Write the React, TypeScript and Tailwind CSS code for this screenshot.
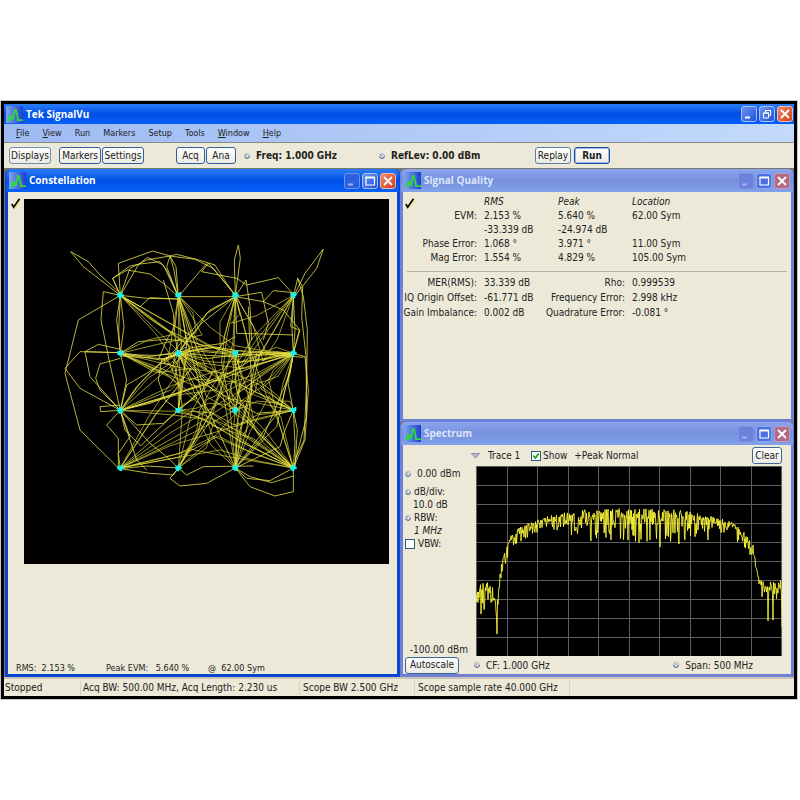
import { ReactNode } from 'react';
import clsx from 'clsx';

type Point = [number, number];

// small seeded generator so the traces look the same on every render
function createRandom(seed: number) {
  let state = seed;
  return () => {
    state = (state + 0x6d2b79f5) | 0;
    let t = Math.imul(state ^ (state >>> 15), 1 | state);
    t = (t + Math.imul(t ^ (t >>> 7), 61 | t)) ^ t;
    return ((t ^ (t >>> 14)) >>> 0) / 4294967296;
  };
}

const toPoints = (points: Point[]) =>
  points.map(([x, y]) => `${x.toFixed(1)},${y.toFixed(1)}`).join(' ');

const COLS = [211, 385, 556, 730];
const ROWS = [196, 370, 541, 714];

const OUTER_PATHS = [
  '211,196 100,110 62,65 115,95 150,135 211,190',
  '556,196 553,90 565,45 571,85 556,196',
  '733,196 765,130 820,57 800,115 733,200',
  '211,196 205,100 308,63 360,78 372,120 385,200',
  '211,196 240,115 290,90 360,78 435,88 490,115 556,196',
  '211,196 188,145 240,108 270,102 330,95 350,120 385,200',
  '211,196 188,145 232,120 300,132 340,160 385,200',
  '211,196 265,105 292,82 340,105 385,200',
  '360,78 380,73 440,88 495,105 530,160 556,196',
  '385,200 350,110 360,78 378,110 385,200',
  '385,200 470,100',
  '455,125 475,100 510,140 556,196',
  '455,125 560,145 590,165 685,143 733,196',
  '211,196 85,270 45,430 90,600 205,714 211,716',
  '211,541 90,475 45,415 90,365 211,368',
  '211,541 120,440 105,365 145,343 211,358',
  '105,365 211,368',
  '211,541 150,480 137,445 150,402 211,385',
  '211,196 160,185 153,270 175,380 211,541',
  '211,541 152,545 150,530 211,525',
  '211,541 170,585 205,625 205,716',
  '211,541 240,620 205,670 211,716',
  '211,196 200,270 211,370',
  '211,196 206,300 211,370',
  '211,196 222,290 211,370',
  '211,370 230,450 211,541',
  '730,370 765,380 775,480 765,630 730,714',
  '730,200 743,145 760,200 772,300 770,460 762,630 735,690',
  '743,145 758,170 755,260 768,380 770,560 730,714',
  '730,200 735,300 730,370 714,460 730,541 735,640 730,714',
  '730,200 726,300 730,370',
  '730,200 722,290 748,300 730,370',
  '556,714 600,770 675,798 730,785 730,714',
  '385,714 360,745 390,768 470,760 556,714',
  '556,714 600,740 665,758 730,738',
  '556,714 590,745 660,752 730,714',
  '211,716 300,730 370,735 385,714',
  '211,716 290,708 385,714',
  '385,200 556,200',
  '211,196 290,205 385,207',
  '211,196 270,230 300,203 385,207',
  '556,200 640,215 700,240 750,300 730,370',
  '556,200 635,187 655,280 640,330',
  '640,215 670,182 733,188',
  '556,200 588,150 600,230 605,330',
  '730,541 742,600 735,714',
  '211,541 225,600 272,648 300,620 385,541',
  '211,541 260,585 340,580 385,541',
  '211,541 300,640 350,680 385,714',
  '211,541 260,690 290,720',
  '385,714 410,735 460,710 610,708',
  '385,370 335,390 325,450 345,510 385,541',
  '385,370 340,400 350,400 375,410 390,480 385,541',
  '556,200 470,250 440,300 410,330 385,370',
  '556,200 455,280 420,320 385,370',
  '556,200 480,240 400,330 340,400',
  '556,200 560,310 640,312 730,315',
  '211,370 265,335 350,328 420,335 556,370',
  '211,370 330,390 430,362 556,374 730,370',
  '211,374 320,376 385,370 470,386 620,366 730,374',
  '211,378 340,386 430,352 520,340 556,320',
  '211,368 300,380 385,366 490,352 556,368',
  '385,370 470,376 556,380 640,372 760,382',
  '211,541 470,462 530,435 620,380',
  '211,541 385,490 500,452 640,400 730,370',
  '211,541 300,520 470,456 556,420 730,374',
  '211,541 270,460 340,390 385,370',
  '211,541 230,465 290,430 335,400',
  '211,541 260,470 330,400 410,350',
  '385,370 470,462 556,541',
  '385,370 440,450 620,550 730,541',
  '385,370 430,460 480,550 556,714',
  '385,200 410,330 440,430 470,550',
  '385,200 375,290 350,330 325,390',
  '385,200 400,270 410,340 400,450 385,541',
  '340,150 370,250 375,320 385,370',
  '556,714 560,640 600,480 620,370',
  '556,714 590,600 605,480 595,230',
  '556,714 575,590 600,500 630,370',
  '556,714 690,540 725,400 730,370',
  '556,714 640,620 720,430 730,370',
  '556,714 680,590 730,370',
  '730,541 705,600 690,650 556,714',
];

function createInnerPaths() {
  const random = createRandom(41);
  const pick = (bias: number) => Math.min(3, Math.floor(random() * 4 + bias));
  const paths: string[] = [];
  while (paths.length < 88) {
    const c1 = pick(0);
    const r1 = pick(0);
    const c2 = pick(0.4);
    const r2 = pick(0.3);
    if (c1 === c2 && r1 === r2) continue;
    // the lower left corner of the grid stays sparse
    if (r1 >= 2 && r2 >= 2 && c1 + c2 < 3) continue;
    const start: Point = [COLS[c1], ROWS[r1]];
    const end: Point = [COLS[c2], ROWS[r2]];
    const pull: Point = [350 + random() * 330, 290 + random() * 360];
    const wobble = 34;
    const points: Point[] = [start];
    for (const t of [0.25, 0.52, 0.78]) {
      const weight = 0.45 * (1 - Math.abs(t - 0.5) * 2) + 0.04;
      const x = start[0] + (end[0] - start[0]) * t;
      const y = start[1] + (end[1] - start[1]) * t;
      points.push([
        Math.min(736, x + (pull[0] - x) * weight + (random() - 0.5) * wobble),
        Math.min(716, y + (pull[1] - y) * weight + (random() - 0.5) * wobble),
      ]);
    }
    points.push(end);
    paths.push(toPoints(points));
  }
  return paths;
}

const INNER_PATHS = createInnerPaths();

// [x, centre of the trace, noise going up, noise going down]
const ENVELOPE = [
  [0, 128, 6, 16],
  [9, 125, 10, 20],
  [18, 125, 6, 10],
  [20, 142, 2, 10],
  [22, 134, 4, 14],
  [24, 108, 4, 8],
  [28, 92, 4, 8],
  [34, 75, 5, 16],
  [44, 65, 4, 11],
  [61, 57, 4, 10],
  [80, 54, 6, 13],
  [100, 54, 10, 18],
  [150, 53, 11, 23],
  [195, 53, 10, 26],
  [230, 54, 6, 14],
  [254, 59, 4, 9],
  [267, 70, 6, 17],
  [277, 84, 5, 8],
  [283, 116, 4, 6],
  [285, 122, 8, 10],
  [306, 122, 8, 13],
];

const SPIKES: Record<number, number> = {
  5: 148,
  21: 168,
  115: 75,
  135: 74,
  174: 74,
  184: 81,
  203: 78,
  232: 74,
  292: 155,
  297: 154,
  306: 161,
};

function createSpectrum() {
  const random = createRandom(7);
  const points: Point[] = [];
  let index = 0;
  for (let x = 0; x <= 306; x += 0.5) {
    while (index < ENVELOPE.length - 2 && ENVELOPE[index + 1][0] < x) index++;
    const a = ENVELOPE[index];
    const b = ENVELOPE[index + 1];
    const t = (x - a[0]) / (b[0] - a[0]);
    const [, centre, up, down] = a.map((value, i) => value + (b[i] - value) * t);
    const noise = random();
    const offset =
      noise < 0.52 ? -up * random() : down * Math.pow(random(), 1.9);
    points.push([x, SPIKES[x] ?? centre + offset]);
  }
  return toPoints(points);
}

const SPECTRUM = createSpectrum();

const MENUS = ['File', 'View', 'Run', 'Markers', 'Setup', 'Tools', 'Window', 'Help'];
const UNDERLINED = ['File', 'View', 'Window', 'Help'];

function AppIcon() {
  return (
    <svg viewBox="0 0 18 18" className="size-[17px] shrink-0" aria-hidden="true">
      <defs>
        <linearGradient id="icon-bg" x1="0" y1="0" x2="1" y2="0">
          <stop offset="0" stopColor="#7fa6ea" />
          <stop offset="1" stopColor="#1c3fd0" />
        </linearGradient>
      </defs>
      <rect width="18" height="18" fill="url(#icon-bg)" />
      <path
        d="M1.500 15h2.500V11h2v2.500h1.500L9.500 4h1l2 8.500V15H18"
        fill="none"
        stroke="#2fd83a"
        strokeWidth="1.900"
      />
    </svg>
  );
}

function CheckMark() {
  return (
    <svg viewBox="0 0 10 11" className="mt-[4px] h-[11px] w-[10px] shrink-0" aria-hidden="true">
      <path d="M1.500 7l2 3L9.300 1.500" fill="none" stroke="#e8e23c" strokeWidth="1.200" />
      <path d="M.8 6l1.800 3.200L8.500.8" fill="none" stroke="#000" strokeWidth="1.600" />
    </svg>
  );
}

function Knob() {
  return (
    <svg viewBox="0 0 6 6" className="size-[6px] shrink-0" aria-hidden="true">
      <circle cx="3" cy="3" r="2.500" fill="#dfe3ea" stroke="#a5a8b8" strokeWidth=".8" />
      <path d="M.7 3.600A2.400 2.400 0 0 0 5.400 3" fill="none" stroke="#5a5aa0" />
      <path d="M1.300 1.200L3 3" stroke="#5aa455" />
    </svg>
  );
}

function WindowButtons({ active, restore }: { active: boolean; restore?: boolean }) {
  const base = 'flex size-[16px] items-center justify-center rounded-[3px] border';
  const blue = 'border-[#a9c0f4] bg-linear-to-br from-[#6d94f2] to-[#2050d8]';
  return (
    <div className="ml-auto flex gap-[2px]">
      <button
        type="button"
        aria-label="Minimize"
        className={clsx(
          base,
          restore && blue,
          !restore && active && 'border-[#6f93ea] bg-[#2c5fe0]',
          !restore && !active && 'border-[#7f92e0] bg-[#6c80dc]',
        )}
      >
        <svg viewBox="0 0 12 12" className="size-[12px]">
          <path d="M2 9.500h5" stroke={restore ? '#fff' : '#9fb4f2'} strokeWidth="2" />
        </svg>
      </button>
      <button
        type="button"
        aria-label={restore ? 'Restore' : 'Maximize'}
        className={clsx(base, active ? blue : 'border-[#8fa8ee] bg-[#4a70e2]')}
      >
        <svg viewBox="0 0 12 12" className="size-[12px]" fill="none" stroke="#fff">
          {restore ? (
            <>
              <path d="M4.500 4V2.500h5v5H8" />
              <path d="M4 2.500h6" />
              <path d="M2.500 5h5v5h-5zM2 5h6" />
            </>
          ) : (
            <>
              <path d="M2 2.500h8.500v7.500H2z" strokeWidth="1.200" />
              <path d="M1.500 2.500h9.500" strokeWidth="2" />
            </>
          )}
        </svg>
      </button>
      <button
        type="button"
        aria-label="Close"
        className={clsx(
          base,
          active
            ? 'border-[#f2b9aa] bg-linear-to-br from-[#ee8666] to-[#d23c14]'
            : 'border-[#bd9cc4] bg-[#b06a83]',
        )}
      >
        <svg viewBox="0 0 12 12" className="size-[12px]">
          <path d="M2 2l8 8M10 2l-8 8" stroke="#fff" strokeWidth="1.800" />
        </svg>
      </button>
    </div>
  );
}

function Panel({
  title,
  active = false,
  className,
  children,
}: {
  title: string;
  active?: boolean;
  className?: string;
  children: ReactNode;
}) {
  return (
    <section
      className={clsx(
        'flex flex-col rounded-t-[5px] border-x-[3px] border-b-[3px]',
        active ? 'border-[#0a45d2] bg-[#0a45d2]' : 'border-[#7080d2] bg-[#7080d2]',
        className,
      )}
    >
      <header
        className={clsx(
          '-mx-[2px] flex h-[23px] items-center gap-[3px] rounded-t-[5px] pr-[3px] pl-[3px] font-bold',
          active
            ? 'bg-linear-to-b from-[#2a7cf8] via-[#0050e4] to-[#0560fa] text-white'
            : 'bg-linear-to-b from-[#8ba6ee] via-[#7690de] to-[#82a2ea] text-[#dde6fb]',
        )}
      >
        <AppIcon />
        <h2 className="font-['Open_Sans','Noto_Sans',sans-serif] text-[10px]">{title}</h2>
        <WindowButtons active={active} />
      </header>
      <div className="flex flex-1 flex-col bg-[#ece9d8]">{children}</div>
    </section>
  );
}

function ToolButton({ className, children }: { className?: string; children: ReactNode }) {
  return (
    <button
      type="button"
      className={clsx(
        'h-[17px] rounded-[3px] border bg-linear-to-b from-white to-[#ebeae2] text-center leading-[14px]',
        className ?? 'border-[#5c7fa8]',
      )}
    >
      {children}
    </button>
  );
}

function Constellation() {
  return (
    <Panel title="Constellation" active>
      <div className="flex gap-[3px] pt-[2px] pr-[8px] pl-[3px]">
        <CheckMark />
        <svg
          viewBox="0 0 365 365"
          role="img"
          aria-label="Constellation plot"
          className="mt-[5px] block min-w-0 flex-1 bg-black"
        >
          <g transform="translate(26 31) scale(.33333)" fill="none" strokeWidth="3">
            <g stroke="#e6e04a" strokeOpacity=".8">
              {OUTER_PATHS.map((points) => (
                <polyline key={points} points={points} />
              ))}
            </g>
            <g stroke="#e6e03c" strokeOpacity=".65">
              {INNER_PATHS.map((points, i) => (
                <polyline key={i} points={points} />
              ))}
            </g>
            {ROWS.map((y, row) =>
              COLS.map((x, col) => (
                <path
                  key={`${x}-${y}`}
                  d={
                    (row + col) % 2
                      ? `M${x - 9} ${y - 7}h12v-3h6v12h-3v7h-9v-4h-6z`
                      : `M${x - 9} ${y - 6}h6v-4h9v6h4v8h-7v6h-8v-5h-4z`
                  }
                  fill="#1ff0e8"
                />
              )),
            )}
          </g>
        </svg>
      </div>
      <div className="mt-auto flex pl-[8px] text-[9px] leading-[12px] whitespace-pre">
        <span className="w-[90px]">RMS:  2.153 %</span>
        <span className="w-[102px]">Peak EVM:   5.640 %</span>
        <span>@  62.00 Sym</span>
      </div>
    </Panel>
  );
}

function SignalQuality() {
  const rows = [
    ['EVM:', '2.153 %', '5.640 %', '62.00 Sym'],
    ['', '-33.339 dB', '-24.974 dB', ''],
    ['Phase Error:', '1.068 °', '3.971 °', '11.00 Sym'],
    ['Mag Error:', '1.554 %', '4.829 %', '105.00 Sym'],
  ];
  const results = [
    ['MER(RMS):', '33.339 dB', 'Rho:', '0.999539'],
    ['IQ Origin Offset:', '-61.771 dB', 'Frequency Error:', '2.998 kHz'],
    ['Gain Imbalance:', '0.002 dB', 'Quadrature Error:', '-0.081 °'],
  ];
  return (
    <Panel title="Signal Quality" className="min-h-[253px]">
      <table className="mt-[2px] w-full table-fixed text-left leading-[14px]">
        <thead>
          <tr>
            <th className="w-[81px] pl-[2px]">
              <CheckMark />
            </th>
            <th className="w-[74px] font-normal italic">RMS</th>
            <th className="w-[74px] font-normal italic">Peak</th>
            <th className="font-normal italic">Location</th>
          </tr>
        </thead>
        <tbody>
          {rows.map(([label, rms, peak, location]) => (
            <tr key={rms}>
              <th className="pr-[7px] text-right font-normal">{label}</th>
              <td>{rms}</td>
              <td>{peak}</td>
              <td>{location}</td>
            </tr>
          ))}
        </tbody>
      </table>
      <hr className="mx-[4px] mt-[6px] mb-[3px] border-[#b5b2a2]" />
      <table className="w-full table-fixed text-left leading-[15px] whitespace-nowrap">
        <tbody>
          {results.map(([label, value, label2, value2]) => (
            <tr key={label}>
              <th className="w-[81px] pr-[7px] font-normal">
                <div className="flex justify-end">{label}</div>
              </th>
              <td className="w-[60px]">{value}</td>
              <th className="w-[88px] pr-[7px] font-normal">
                <div className="flex justify-end">{label2}</div>
              </th>
              <td>{value2}</td>
            </tr>
          ))}
        </tbody>
      </table>
    </Panel>
  );
}

function SpectrumPlot() {
  return (
    <svg
      viewBox="0 0 306 190"
      role="img"
      aria-label="Spectrum plot"
      className="block w-full bg-black"
    >
      <g stroke="#5e5e5e">
        {Array.from({ length: 11 }, (_, i) => (
          <path key={`v${i}`} d={`M${Math.round(i * 30.5) + 0.5} 0v190`} />
        ))}
        {Array.from({ length: 11 }, (_, i) => (
          <path key={`h${i}`} d={`M0 ${i * 19 + 0.5}h306`} />
        ))}
      </g>
      <polyline points={SPECTRUM} fill="none" stroke="#f8f43a" strokeWidth=".9" />
    </svg>
  );
}

function Spectrum() {
  return (
    <Panel title="Spectrum">
      <div className="flex h-[21px] items-center pr-[9px] pl-[68px]">
        <label className="flex items-center">
          <svg viewBox="0 0 9 6" className="h-[6px] w-[9px]" aria-hidden="true">
            <path d="M0 .5h9L4.500 5.500z" fill="#b7bbd6" />
            <path d="M0 .5h9M1 1l3.500 4L8 1" fill="none" stroke="#7c80a8" strokeWidth=".8" />
          </svg>
          <select aria-label="Trace" className="ml-[8px] w-[43px] appearance-none">
            <option>Trace 1</option>
          </select>
        </label>
        <label className="flex items-center gap-[2px]">
          <span className="relative flex">
            <input
              type="checkbox"
              defaultChecked
              className="peer size-[10px] appearance-none border border-[#2d5a85] bg-white"
            />
            <svg
              viewBox="0 0 10 10"
              className="pointer-events-none absolute inset-0 hidden size-[10px] peer-checked:block"
            >
              <path d="M2.300 4.500l2 2.500 3.500-4.500" fill="none" stroke="#21a121" strokeWidth="1.800" />
            </svg>
          </span>
          Show
        </label>
        <span className="ml-[7px]">+Peak Normal</span>
        <ToolButton className="ml-auto w-[30px] border-[#3d6a94]">Clear</ToolButton>
      </div>
      <div className="flex pr-[9px]">
        <div className="flex w-[73px] shrink-0 flex-col pt-[1px] pl-[2px] leading-[13px]">
          <div className="flex items-center gap-[6px]">
            <Knob />
            0.00 dBm
          </div>
          <div className="mt-[5px] flex items-center gap-[3px]">
            <Knob />
            dB/div:
          </div>
          <div className="pl-[8px]">10.0 dB</div>
          <div className="flex items-center gap-[3px]">
            <Knob />
            RBW:
          </div>
          <div className="pl-[9px] italic">1 MHz</div>
          <label className="flex items-center gap-[3px]">
            <input
              type="checkbox"
              className="size-[10px] appearance-none border border-[#2d5a85] bg-white"
            />
            VBW:
          </label>
          <div className="mt-auto pr-[8px] text-right">-100.00 dBm</div>
        </div>
        <div className="min-w-0 flex-1">
          <SpectrumPlot />
        </div>
      </div>
      <div className="flex h-[18px] items-center pr-[9px] pl-[2px]">
        <ToolButton className="h-[16px] w-[54px] border-[#3d6a94]">Autoscale</ToolButton>
        <div className="ml-[15px] flex flex-1 items-center gap-[6px]">
          <Knob />
          CF: 1.000 GHz
        </div>
        <div className="flex items-center gap-[6px] pr-[29px]">
          <Knob />
          Span: 500 MHz
        </div>
      </div>
    </Panel>
  );
}

export default function App() {
  return (
    <div className="min-h-screen bg-white pt-[101px] pr-[3px] pl-[1px] font-['DejaVu_Sans_Condensed','DejaVu_Sans',sans-serif] text-[10px] whitespace-nowrap text-[#222]">
      <main className="border-[3px] border-black bg-[#ece9d8] shadow-[0_0_0_1px_#c8c8c8]">
        <header className="flex h-[20px] items-center gap-[3px] bg-linear-to-b from-[#2a7cf8] via-[#0050e4] to-[#0560fa] pr-[1px] pl-[2px] font-bold text-white">
          <AppIcon />
          <h1 className="font-['Open_Sans','Noto_Sans',sans-serif] text-[10px]">Tek SignalVu</h1>
          <WindowButtons active restore />
        </header>
        <nav className="flex h-[19px] items-center gap-[13px] border-b border-[#8b8a82] bg-linear-to-r from-[#9ebaf2] to-[#c3dafb] pt-[1px] pl-[12px] text-[9px]">
          {MENUS.map((menu) => (
            <button type="button" key={menu}>
              {UNDERLINED.includes(menu) ? (
                <>
                  <u>{menu[0]}</u>
                  {menu.slice(1)}
                </>
              ) : (
                menu
              )}
            </button>
          ))}
        </nav>
        <div className="flex h-[25px] items-center pl-[5px]">
          <ToolButton className="w-[42px] border-[#6f8fb5]">Displays</ToolButton>
          <ToolButton className="ml-[8px] w-[42px] border-[#2f5f9c]">Markers</ToolButton>
          <ToolButton className="ml-[1px] w-[42px] border-[#2f5f9c]">Settings</ToolButton>
          <ToolButton className="ml-[32px] w-[29px] border-[#2f5f9c]">Acq</ToolButton>
          <ToolButton className="ml-[1px] w-[30px] border-[#2f5f9c]">Ana</ToolButton>
          <div className="ml-[8px] flex w-[135px] items-center gap-[6px] font-bold">
            <Knob />
            Freq: 1.000 GHz
          </div>
          <div className="flex w-[156px] items-center gap-[6px] font-bold">
            <Knob />
            RefLev: 0.00 dBm
          </div>
          <ToolButton className="w-[36px] border-[#5c7fa8]">Replay</ToolButton>
          <ToolButton className="ml-[3px] w-[36px] border-[#1d4a9c] font-bold shadow-[inset_0_0_0_1px_#9db8ea]">
            Run
          </ToolButton>
        </div>
        <div className="grid grid-cols-[395fr_394fr] border-t border-[#77756c] bg-[#77756c] pl-[1px]">
          <Constellation />
          <div className="flex flex-col">
            <SignalQuality />
            <Spectrum />
          </div>
        </div>
        <footer className="flex h-[19px] items-center border-t-2 border-[#c9c6b8] leading-[14px]">
          <span className="w-[77px] border-r border-[#d5d2c2] pl-[1px]">Stopped</span>
          <span className="w-[219px] border-r border-[#d5d2c2] pl-[2px]">
            Acq BW: 500.00 MHz, Acq Length: 2.230 us
          </span>
          <span className="w-[115px] border-r border-[#d5d2c2] pl-[3px]">Scope BW 2.500 GHz</span>
          <span className="w-[155px] border-r border-[#d5d2c2] pl-[3px]">
            Scope sample rate 40.000 GHz
          </span>
        </footer>
      </main>
    </div>
  );
}
